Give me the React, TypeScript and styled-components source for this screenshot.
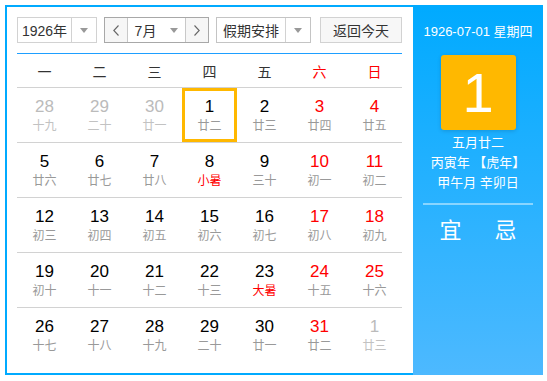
import React from 'react';
import styled, { createGlobalStyle } from 'styled-components';

type Day = {
  day: number;
  lunar: string;
  weekend?: boolean;
  other?: boolean;
  term?: boolean;
  today?: boolean;
};

const WEEK = ['一', '二', '三', '四', '五', '六', '日'];

const ROWS: Day[][] = [
  [
    { day: 28, lunar: '十九', other: true },
    { day: 29, lunar: '二十', other: true },
    { day: 30, lunar: '廿一', other: true },
    { day: 1, lunar: '廿二', today: true },
    { day: 2, lunar: '廿三' },
    { day: 3, lunar: '廿四', weekend: true },
    { day: 4, lunar: '廿五', weekend: true },
  ],
  [
    { day: 5, lunar: '廿六' },
    { day: 6, lunar: '廿七' },
    { day: 7, lunar: '廿八' },
    { day: 8, lunar: '小暑', term: true },
    { day: 9, lunar: '三十' },
    { day: 10, lunar: '初一', weekend: true },
    { day: 11, lunar: '初二', weekend: true },
  ],
  [
    { day: 12, lunar: '初三' },
    { day: 13, lunar: '初四' },
    { day: 14, lunar: '初五' },
    { day: 15, lunar: '初六' },
    { day: 16, lunar: '初七' },
    { day: 17, lunar: '初八', weekend: true },
    { day: 18, lunar: '初九', weekend: true },
  ],
  [
    { day: 19, lunar: '初十' },
    { day: 20, lunar: '十一' },
    { day: 21, lunar: '十二' },
    { day: 22, lunar: '十三' },
    { day: 23, lunar: '大暑', term: true },
    { day: 24, lunar: '十五', weekend: true },
    { day: 25, lunar: '十六', weekend: true },
  ],
  [
    { day: 26, lunar: '十七' },
    { day: 27, lunar: '十八' },
    { day: 28, lunar: '十九' },
    { day: 29, lunar: '二十' },
    { day: 30, lunar: '廿一' },
    { day: 31, lunar: '廿二', weekend: true },
    { day: 1, lunar: '廿三', other: true },
  ],
];

const Chevron: React.FC<{ dir: 'left' | 'right' }> = ({ dir }) => (
  <svg width="6" height="11" viewBox="0 0 6 11">
    <path
      d={dir === 'left' ? 'M5.5 0.5 L0.8 5.5 L5.5 10.5' : 'M0.5 0.5 L5.2 5.5 L0.5 10.5'}
      fill="none"
      stroke="#666"
      strokeWidth="1.1"
    />
  </svg>
);

const App: React.FC = () => {
  return (
    <>
      <GlobalStyle />
      <Frame>
        <Main>
          <Toolbar>
            <Select width={80} border="#d2d2d2">
              <SelectText>1926年</SelectText>
              <ArrowBox>
                <Caret />
              </ArrowBox>
            </Select>
            <Select width={105} border="#a8a8a8">
              <NavButton>
                <Chevron dir="left" />
              </NavButton>
              <SelectText>7月</SelectText>
              <PlainCaret>
                <Caret />
              </PlainCaret>
              <NavButton right>
                <Chevron dir="right" />
              </NavButton>
            </Select>
            <Select width={95} border="#c4c4c4">
              <SelectText>假期安排</SelectText>
              <ArrowBox>
                <Caret />
              </ArrowBox>
            </Select>
            <TodayButton>返回今天</TodayButton>
          </Toolbar>

          <WeekHead>
            {WEEK.map((w, i) => (
              <WeekCell key={w} red={i >= 5}>
                {w}
              </WeekCell>
            ))}
          </WeekHead>

          {ROWS.map((row, r) => (
            <Row key={r} last={r === ROWS.length - 1}>
              {row.map((d, i) => (
                <Cell key={i} today={d.today}>
                  <DayNum tone={d.other ? 'faded' : d.weekend ? 'red' : 'normal'}>{d.day}</DayNum>
                  <Lunar tone={d.other ? 'faded' : d.term ? 'red' : 'normal'}>{d.lunar}</Lunar>
                </Cell>
              ))}
            </Row>
          ))}
        </Main>

        <Side>
          <SideDate>1926-07-01 星期四</SideDate>
          <BigDay>1</BigDay>
          <SideLine>五月廿二</SideLine>
          <SideLine>丙寅年 【虎年】</SideLine>
          <SideLine>甲午月 辛卯日</SideLine>
          <Divider />
          <Advice>
            <span>宜</span>
            <span>忌</span>
          </Advice>
        </Side>
      </Frame>
    </>
  );
};

const GlobalStyle = createGlobalStyle`
  body {
    margin: 0;
    background: #fff;
    font-family: 'Liberation Sans', 'Noto Sans CJK SC', sans-serif;
    color: #333;
  }
`;

const Frame = styled.div`
  display: flex;
  margin: 5px;
  width: 538px;
  height: 370px;
`;

const Main = styled.div`
  width: 408px;
  box-sizing: border-box;
  border: 2px solid #00aaff;
  border-right: none;
  padding: 10px 11px 0 10px;
  background: #fff;
`;

const Toolbar = styled.div`
  display: flex;
  align-items: center;
  height: 26px;
  gap: 7px;
  padding-bottom: 10px;
  border-bottom: 1px solid #1e9fff;
`;

const Select = styled.div<{ width: number; border: string }>`
  display: flex;
  align-items: stretch;
  width: ${(p) => p.width}px;
  height: 26px;
  box-sizing: border-box;
  border: 1px solid ${(p) => p.border};
  background: #fff;
`;

const SelectText = styled.div`
  flex: 1;
  display: flex;
  align-items: center;
  justify-content: center;
  font-size: 14px;
  color: #333;
`;

const ArrowBox = styled.div`
  width: 24px;
  display: flex;
  align-items: center;
  justify-content: center;
  border-left: 1px solid #d2d2d2;
`;

const PlainCaret = styled.div`
  width: 22px;
  display: flex;
  align-items: center;
  justify-content: center;
`;

const Caret = styled.span`
  width: 0;
  height: 0;
  border-left: 4px solid transparent;
  border-right: 4px solid transparent;
  border-top: 5px solid #999;
`;

const NavButton = styled.div<{ right?: boolean }>`
  width: 22px;
  display: flex;
  align-items: center;
  justify-content: center;
  background: #f6f6f6;
  ${(p) => (p.right ? 'border-left: 1px solid #c8c8c8;' : 'border-right: 1px solid #c8c8c8;')}
`;

const TodayButton = styled.div`
  margin-left: 2px;
  width: 82px;
  height: 26px;
  box-sizing: border-box;
  border: 1px solid #d2d2d2;
  background: #f7f7f7;
  display: flex;
  align-items: center;
  justify-content: center;
  font-size: 14px;
  color: #333;
`;

const WeekHead = styled.div`
  display: grid;
  grid-template-columns: repeat(7, 55px);
  height: 33px;
  border-bottom: 1px solid #d2d2d2;
`;

const WeekCell = styled.div<{ red?: boolean }>`
  display: flex;
  align-items: center;
  justify-content: center;
  font-size: 14px;
  color: ${(p) => (p.red ? '#ff0000' : '#333')};
`;

const Row = styled.div<{ last?: boolean }>`
  display: grid;
  grid-template-columns: repeat(7, 55px);
  height: 54px;
  border-bottom: ${(p) => (p.last ? 'none' : '1px solid #d2d2d2')};
`;

const Cell = styled.div<{ today?: boolean }>`
  display: flex;
  flex-direction: column;
  align-items: center;
  justify-content: center;
  gap: 1px;
  box-sizing: border-box;
  border: 3px solid ${(p) => (p.today ? '#ffb800' : 'transparent')};
`;

const DayNum = styled.div<{ tone: 'normal' | 'red' | 'faded' }>`
  font-size: 17px;
  line-height: 20px;
  color: ${(p) => (p.tone === 'red' ? '#ff0000' : p.tone === 'faded' ? '#bbb' : '#000')};
`;

const Lunar = styled.div<{ tone: 'normal' | 'red' | 'faded' }>`
  font-size: 12px;
  line-height: 16px;
  color: ${(p) => (p.tone === 'red' ? '#ff0000' : p.tone === 'faded' ? '#c2c2c2' : '#999')};
`;

const Side = styled.div`
  width: 130px;
  background: linear-gradient(#00aaff, #4db9ff);
  color: #fff;
  display: flex;
  flex-direction: column;
  align-items: center;
`;

const SideDate = styled.div`
  margin-top: 18px;
  font-size: 13px;
  line-height: 18px;
`;

const BigDay = styled.div`
  margin-top: 14px;
  margin-bottom: 3px;
  width: 75px;
  height: 75px;
  border-radius: 3px;
  background: #ffb800;
  box-shadow: 0 1px 4px rgba(0, 0, 0, 0.15);
  display: flex;
  align-items: center;
  justify-content: center;
  font-size: 56px;
  line-height: 1;
`;

const SideLine = styled.div`
  font-size: 13px;
  line-height: 20px;
`;

const Divider = styled.div`
  width: 110px;
  height: 2px;
  margin-top: 10px;
  background: rgba(255, 255, 255, 0.45);
`;

const Advice = styled.div`
  display: flex;
  gap: 33px;
  margin-top: 11px;
  font-size: 22px;
  line-height: 30px;
`;

export default App;
